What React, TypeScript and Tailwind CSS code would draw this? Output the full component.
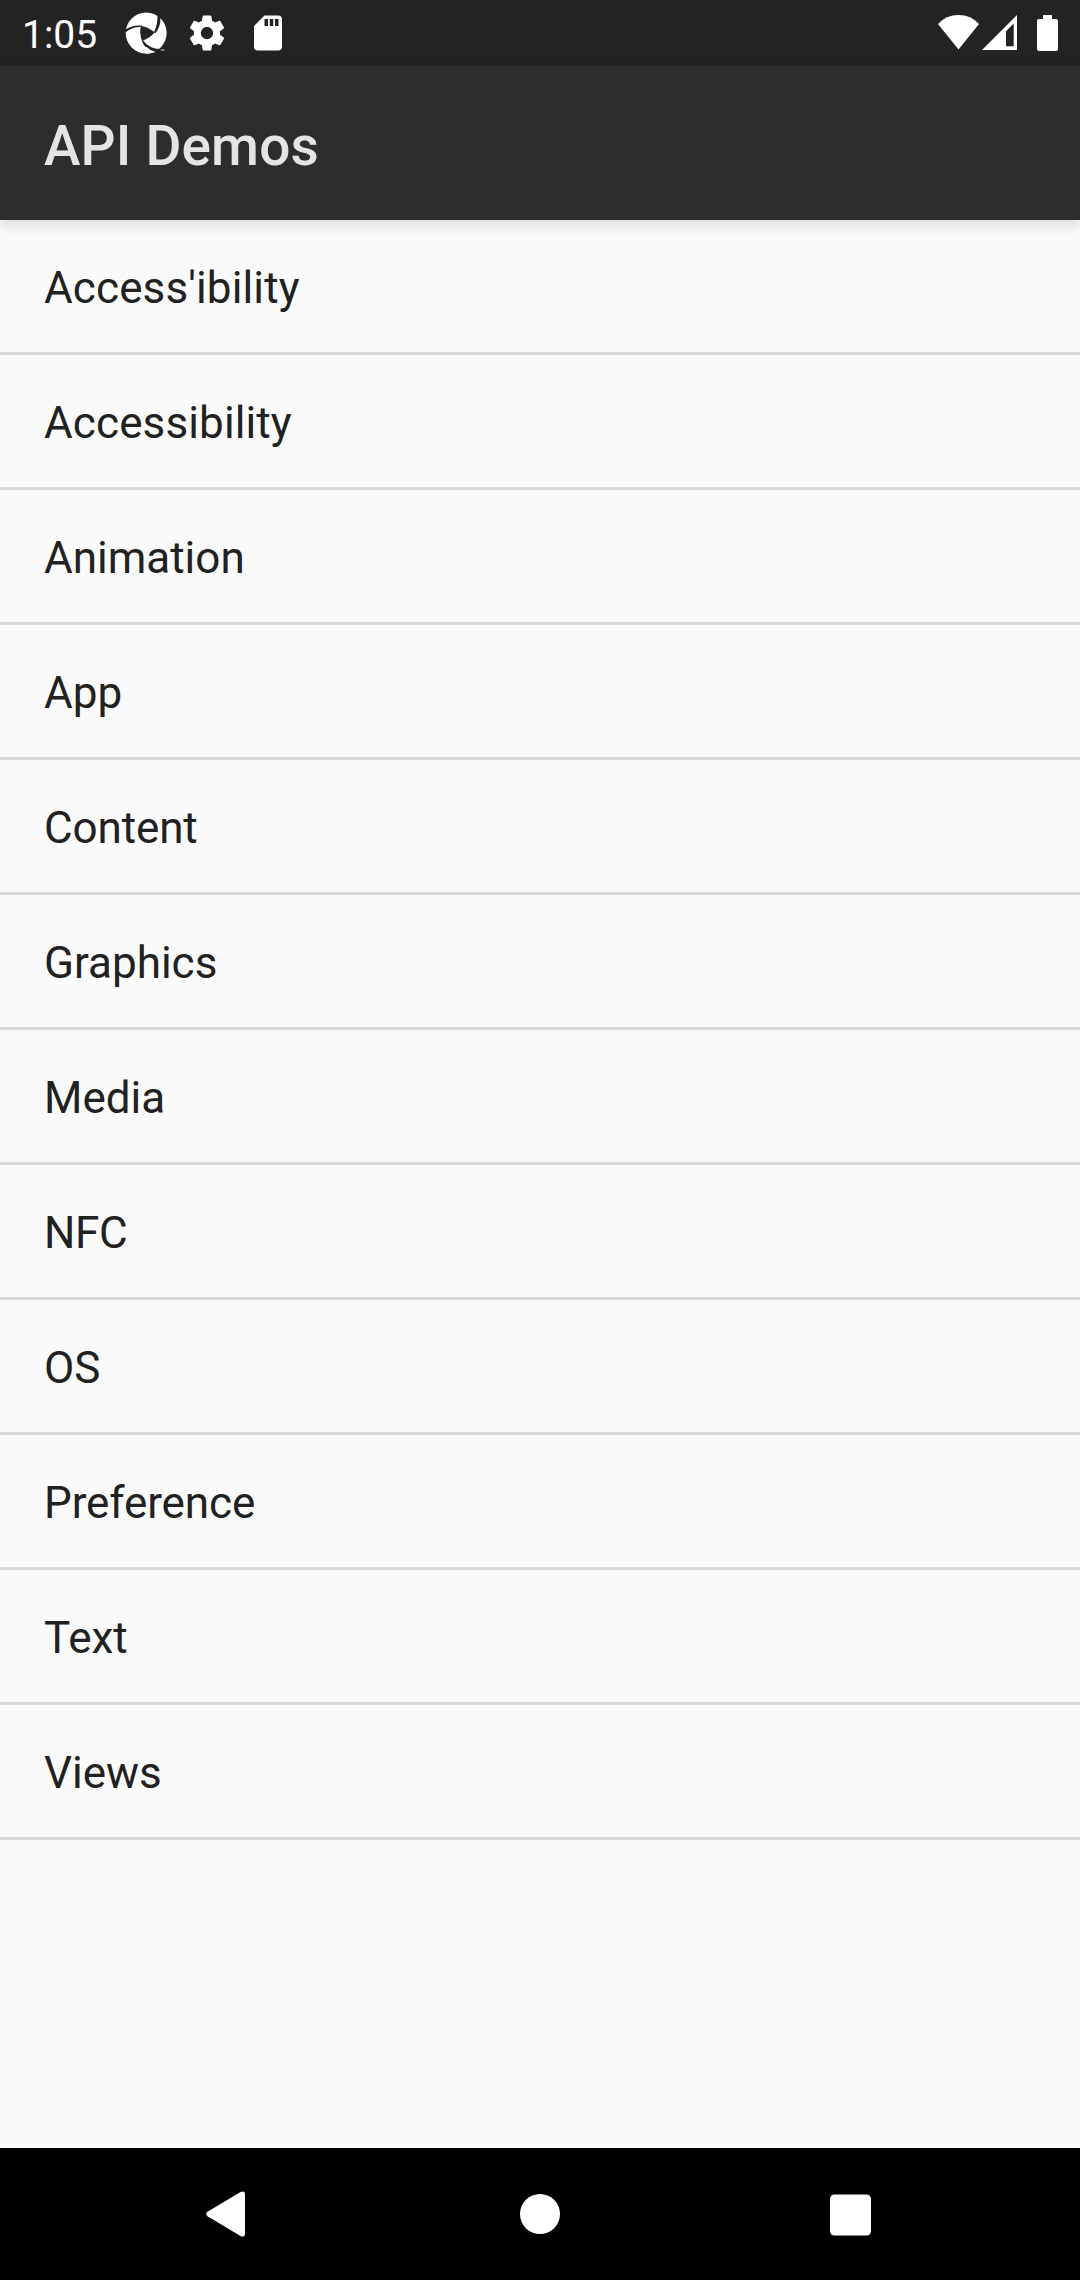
const items = [
  { label: "Access'ibility", tracking: 'tracking-[0.12px]' },
  { label: 'Accessibility', tracking: 'tracking-[0.12px]' },
  { label: 'Animation', tracking: '' },
  { label: 'App', tracking: '' },
  { label: 'Content', tracking: 'tracking-[-0.12px]' },
  { label: 'Graphics', tracking: '' },
  { label: 'Media', tracking: '' },
  { label: 'NFC', tracking: 'tracking-[-0.3px]' },
  { label: 'OS', tracking: '' },
  { label: 'Preference', tracking: 'tracking-[-0.1px]' },
  { label: 'Text', tracking: '' },
  { label: 'Views', tracking: '' },
];

function PinwheelIcon() {
  return (
    <svg className="ml-[28.3px] h-[42px] w-[42px]" viewBox="376 37 126 126">
      <circle cx="439.5" cy="100" r="61.5" fill="#fff" />
      <g fill="#232323">
        <path d="M424 79Q445 82 465 98Q452 116 427 123Q418 101 424 79Z" />
        <path d="M376 91Q398 74 428 78L426 82Q398 80 376 99Z" />
        <path d="M473 41L482 52Q484 80 467 101L463 97Q476 72 473 41Z" />
        <path d="M429 120Q446 146 484 149L462 161Q438 150 426 123Z" />
      </g>
      <path d="M440 141Q450 152 468 157L460 159.5Q446 163 437 161.5L430 150Z" fill="#fff" />
      <path d="M483 149h12v4h-12z" fill="#aaa" />
    </svg>
  );
}

function GearIcon() {
  return (
    <svg className="ml-[19px] h-[42px] w-[42px]" viewBox="0 0 24 24" fill="#fff">
      <path d="M19.43 12.98c.04-.32.07-.64.07-.98s-.03-.66-.07-.98l2.11-1.65c.19-.15.24-.42.12-.64l-2-3.46c-.12-.22-.39-.3-.61-.22l-2.49 1c-.52-.4-1.08-.73-1.69-.98l-.38-2.65A.488.488 0 0 0 14 2h-4c-.25 0-.46.18-.49.42l-.38 2.65c-.61.25-1.17.59-1.69.98l-2.49-1c-.23-.09-.49 0-.61.22l-2 3.46c-.13.22-.07.49.12.64l2.11 1.65c-.04.32-.07.65-.07.98s.03.66.07.98l-2.11 1.65c-.19.15-.24.42-.12.64l2 3.46c.12.22.39.3.61.22l2.49-1c.52.4 1.08.73 1.69.98l.38 2.65c.03.24.24.42.49.42h4c.25 0 .46-.18.49-.42l.38-2.65c.61-.25 1.17-.59 1.69-.98l2.49 1c.23.09.49 0 .61-.22l2-3.46c.12-.22.07-.49-.12-.64l-2.11-1.65zM12 15.5c-1.93 0-3.5-1.57-3.5-3.5s1.57-3.5 3.5-3.5 3.5 1.57 3.5 3.5-1.57 3.5-3.5 3.5z" />
    </svg>
  );
}

function SdCardIcon() {
  return (
    <svg className="ml-[19px] h-[42px] w-[42px]" viewBox="0 0 24 24" fill="#fff">
      <path d="M18 2h-8L4.02 8 4 20c0 1.1.9 2 2 2h12c1.1 0 2-.9 2-2V4c0-1.1-.9-2-2-2zm-6 6h-2V4h2v4zm3 0h-2V4h2v4zm3 0h-2V4h2v4z" />
    </svg>
  );
}

function StatusIcons() {
  return (
    <svg className="mr-[20px] ml-auto h-[66px] w-[124px]" viewBox="936 0 124 66" fill="#fff">
      <path d="M938 24Q946 15 958.5 15Q971 15 979 24L958.5 49.5Z" />
      <path fillRule="evenodd" d="M982 50L1017 15V50ZM1006 31.3V46.3H1013.7V23.6Z" />
      <path d="M1043 15h9v4h4q2 0 2 2v28q0 2-2 2h-17q-2 0-2-2v-28q0-2 2-2h4z" />
    </svg>
  );
}

export default function App() {
  return (
    <div className="flex h-[2280px] w-[1080px] flex-col overflow-hidden bg-[#fafafa] font-['Roboto',sans-serif]">
      <div className="flex h-[66px] shrink-0 items-center bg-[#232323] pl-[22px]">
        <span className="w-[75px] pt-[3px] text-[39px] leading-[46px] text-white">1:05</span>
        <PinwheelIcon />
        <GearIcon />
        <SdCardIcon />
        <StatusIcons />
      </div>
      <header className="z-10 flex h-[154px] shrink-0 items-center bg-[#2d2d2d] pt-[6px] pl-11 text-[55px] font-medium tracking-[0.15px] text-[#e4e4e4] shadow-[0_3px_14px_rgba(0,0,0,0.16)]">
        API Demos
      </header>
      <ul className="grow">
        {items.map(({ label, tracking }) => (
          <li
            key={label}
            className={`flex h-[135px] items-center border-b-[3px] border-[#dadada] pt-1 pl-11 text-[44px] text-[#212121] ${tracking}`}
          >
            {label}
          </li>
        ))}
      </ul>
      <nav className="flex h-[132px] shrink-0 items-center bg-black pl-[206px]">
        <svg className="h-[46px] w-[39px]" viewBox="0 0 39 46" fill="#fff">
          <path d="M1.5 20.8L34.5 1Q39 -1 39 3.5V42.5Q39 47 34.5 45L1.5 25.2Q-1.2 23 1.5 20.8Z" />
        </svg>
        <div className="ml-[275px] size-10 rounded-full bg-white" />
        <div className="ml-[270px] size-[41px] translate-y-[0.5px] rounded-[4.5px] bg-white" />
      </nav>
    </div>
  );
}
